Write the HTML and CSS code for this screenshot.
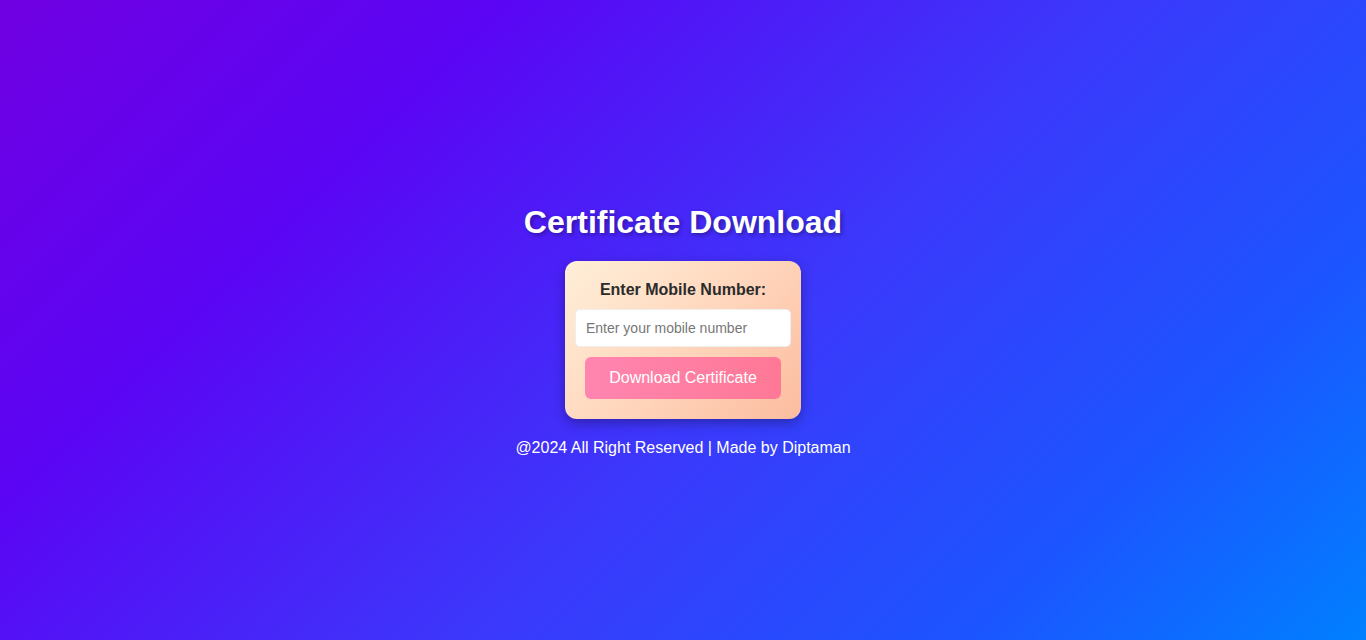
FILE: index.html
```html
<!DOCTYPE html>
<html lang="en">
<head>
<meta charset="utf-8">
<title>Certificate Download</title>
<link rel="stylesheet" href="styles.css">
</head>
<body>
<main class="page">
  <h1 class="title">Certificate Download</h1>
  <form class="card">
    <label class="card-label" for="mobile">Enter Mobile Number:</label>
    <input class="card-input" id="mobile" type="text" placeholder="Enter your mobile number">
    <button class="card-button" type="button">Download Certificate</button>
  </form>
  <p class="footer">@2024 All Right Reserved | Made by Diptaman</p>
</main>
</body>
</html>
```
FILE: styles.css
```css
html, body {
  margin: 0;
  padding: 0;
  height: 100%;
}
body {
  font-family: "Liberation Sans", Arial, sans-serif;
  background: linear-gradient(135deg, #7000e2 0%, #5b05f4 25%, #3c38fb 55%, #1c55ff 80%, #0080ff 100%);
  overflow: hidden;
}
.page {
  box-sizing: border-box;
  height: 100vh;
  padding-top: 21px;
  display: flex;
  flex-direction: column;
  align-items: center;
  justify-content: center;
}
.title {
  margin: 0 0 20px;
  font-size: 32px;
  line-height: 37px;
  font-weight: bold;
  color: #fff;
  text-shadow: 2px 2px 4px rgba(0, 0, 0, 0.35);
}
.card {
  box-sizing: border-box;
  width: 236px;
  padding: 19px 10px 20px;
  border-radius: 12px;
  background: linear-gradient(135deg, #ffefd9 0%, #ffd7bd 50%, #fcbc9f 100%);
  box-shadow: 0 4px 12px rgba(0, 0, 0, 0.3);
  display: flex;
  flex-direction: column;
  align-items: center;
}
.card-label {
  font-size: 16px;
  line-height: 20px;
  font-weight: bold;
  color: #2b2b2b;
  margin-bottom: 9px;
}
.card-input {
  box-sizing: border-box;
  width: 216px;
  height: 38px;
  padding: 0 10px;
  border: 1px solid #eee;
  border-radius: 5px;
  background: #fff;
  font-family: "Liberation Sans", Arial, sans-serif;
  font-size: 14px;
  color: #333;
  outline: none;
  margin-bottom: 10px;
}
.card-input::placeholder {
  color: #777;
}
.card-button {
  box-sizing: border-box;
  width: 196px;
  height: 42px;
  border: none;
  border-radius: 6px;
  background: linear-gradient(90deg, #ff85b0 0%, #ff7896 100%);
  color: #fff;
  font-family: "Liberation Sans", Arial, sans-serif;
  font-size: 16px;
  cursor: pointer;
}
.footer {
  margin: 20px 0 0;
  font-size: 16px;
  line-height: 18px;
  color: #fff;
}
```
